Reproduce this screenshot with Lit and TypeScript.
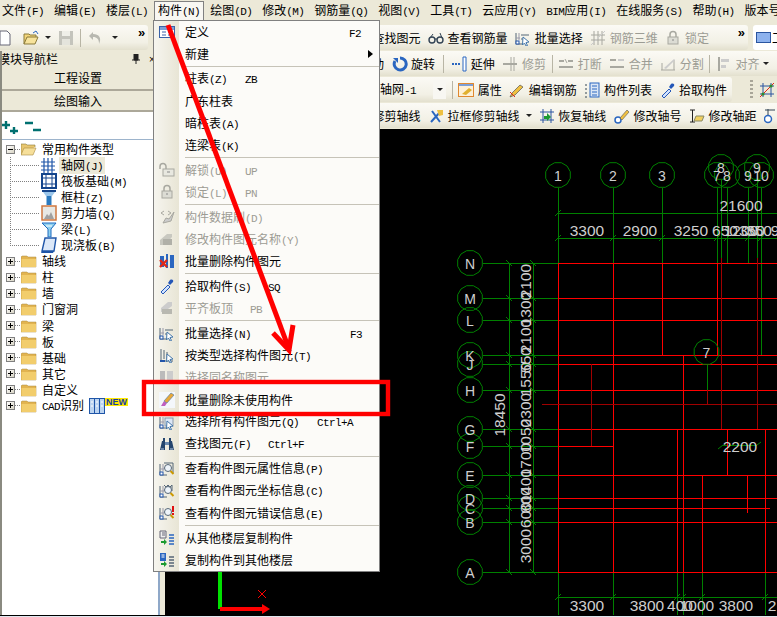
import { LitElement, css, html, svg } from 'lit';
import { customElement } from 'lit/decorators.js';

// latin runs are set apart so they get the half-width look of the original UI font
const txt = (s: string) =>
  s.split(/([\x20-\x7e]+)/).map((p, i) => (i % 2 ? html`<span class="k">${p}</span>` : p));

const G = '#a8a8a0';
const arrowCur = svg`<path d="M8 7l6 5-3 .5 1.5 3-1.5.5-1.5-3-2 2z" fill="#fff" stroke="#47a"/>`;
const lens = svg`<circle cx="9" cy="7" r="3.5" fill="#eef4fa" stroke="#567"/><path d="M11.5 10l3 3" stroke="#c90" stroke-width="2"/>`;
const sheet = svg`<path d="M1 3v11h7" fill="none" stroke="#567"/><path d="M1 8h4M4 3v7" stroke="#99a" fill="none"/><rect x="1" y="11" width="3" height="3" fill="#fff" stroke="#25a"/>`;

const icons: Record<string, unknown> = {
  table: svg`<rect x=".5" y="2.5" width="15" height="11" fill="#fff" stroke="#3a62a8"/><rect x="1" y="3" width="14" height="3" fill="#7d9fd6"/><path d="M3 8h4M9 8h5M3 11h4M9 11h5" stroke="#3a62a8"/>`,
  lock: svg`<path d="M5 7V4.5a3 3 0 016 0V7" fill="none" stroke=${G} stroke-width="1.5"/><rect x="3" y="7" width="10" height="7" fill="#dcdcd4" stroke=${G}/><path d="M7 10h2" stroke="#888"/>`,
  unlock: svg`<path d="M1 7V4.5a3 3 0 016 0V7" fill="none" stroke=${G} stroke-width="1.5"/><rect x="4" y="7" width="11" height="7" fill="#e8e8e0" stroke=${G}/><path d="M8 10h3" stroke="#888"/>`,
  brush: svg`<path d="M2 4l3-2M2 4l3 2M9 2l3 2-3 2" fill="none" stroke=${G}/><path d="M4 14l3-5 3 1 5-7-3 9z" fill="#ccc" stroke=${G}/>`,
  rename: svg`<path d="M1 9l7-6h5v3L6 14H1z" fill="#c8c8c0"/><path d="M4 8h9v6H4z" fill="#b0b0a8"/>`,
  del: svg`<path d="M1 3h4v11H1zM7 1h2v14H7zM11 2h4v13h-4z" fill="#2a66c0"/><path d="M1 7l7 7M8 7l-7 7" stroke="#e02818" stroke-width="2.4"/>`,
  dropper: svg`<path d="M2 14l7-7 2 2-7 7z" fill="#cfe2ff" stroke="#2457b8"/><path d="M9 5l2 2 3-3c1-2-1-3-3-2z" fill="#2457b8"/>`,
  flat: svg`<path d="M2 8l7-6h4v4L5 12H2z" fill="#ccc"/><rect x="3" y="9" width="10" height="5" fill="#b8b8b0"/>`,
  select: svg`${sheet}<path d="M6 5h8M6 9h2" stroke="#567"/>${arrowCur}`,
  bytype: svg`<path d="M2 2v12h12M5 3v9M8 5v7" stroke="#567" fill="none"/><path d="M1 14h5" stroke="#25a" stroke-width="2"/>${arrowCur}`,
  same: svg`<rect x="1" y="2" width="5" height="12" fill="#bbb"/><rect x="8" y="2" width="6" height="12" fill="#ccc"/>`,
  clean: svg`<rect x="0" y="0" width="16" height="16" fill="#f4f7fb"/><path d="M2 14l3-5 3 2-2 3z" fill="#c060c0"/><path d="M5 9l7-8 3 2-7 8z" fill="#e8a838" stroke="#47a" stroke-width=".6"/>`,
  selall: svg`${sheet}<rect x="6" y="4" width="8" height="8" fill="#dbe6f5" stroke="#89a"/>${arrowCur}`,
  bino: svg`<path d="M1 14l2-9h3v9zM10 14V5h3l2 9z" fill="#24456e"/><path d="M4 2h2v3H4zM10 2h2v3h-2z" fill="#24456e"/><rect x="6" y="6" width="4" height="3" fill="#6a8ab0"/><path d="M2 13h3M11 13h3" stroke="#b8cce4"/>`,
  viewp: svg`${sheet}<path d="M5 2h9v10" fill="none" stroke="#567"/>${lens}`,
  viewc: svg`${sheet}<path d="M5 2l2 2 2-2 2 2 2-2v6" fill="none" stroke="#567"/>${lens}`,
  viewe: svg`${sheet}${lens}<path d="M14 1v6M14 8v2" stroke="#e01010" stroke-width="2"/>`,
  copyf: svg`<path d="M1 1h6v7H1z" fill="#eee" stroke="#667"/><path d="M3 3h3M3 5h3" stroke="#667"/><path d="M10 5h5M10 8h5M10 11h5M10 14h5" stroke="#2a66c0" stroke-width="1.6"/><path d="M2 11h3V9l3 3-3 3v-2H2z" fill="#1a9a30"/>`,
  copyt: svg`<path d="M1 1h6v8H1z" fill="#2a66c0"/><path d="M2.5 3h3M2.5 5h3" stroke="#fff"/><path d="M10 5h5M10 8h5M10 11h5M10 14h5" stroke="#567" stroke-width="1.6"/><path d="M2 11h3V9l3 3-3 3v-2H2z" fill="#1a9a30"/>`,
  doc: svg`<path d="M3 1h7l3 3v11H3z" fill="#fff" stroke="#667"/>`,
  open: svg`<path d="M1 14V4h5l1 1h6v2" fill="#f4d67a" stroke="#8a7a3a"/><path d="M1 14l3-7h11l-3 7z" fill="#f7e39c" stroke="#8a7a3a"/><path d="M10 3l3-2 2 3" fill="none" stroke="#2a66c0"/>`,
  save: svg`<rect x="1" y="1" width="14" height="14" fill="#c4c4bc"/><rect x="4" y="1" width="8" height="5" fill="#efefe8"/><rect x="4" y="9" width="8" height="6" fill="#e4e4dc"/>`,
  undo: svg`<path d="M5 2L1 6l4 4V7c4 0 6 2 6 7 3-6 0-10-6-10z" fill="#b8b8b0"/>`,
  find: svg`<circle cx="6" cy="7" r="4" fill="#dbe6f5" stroke="#567"/><path d="M9 10l5 4" stroke="#567" stroke-width="2"/>`,
  glasses: svg`<circle cx="4" cy="10" r="3" fill="none" stroke="#345" stroke-width="1.4"/><circle cx="12" cy="10" r="3" fill="none" stroke="#345" stroke-width="1.4"/><path d="M7 9h2M2 8l3-4M14 8l-2-5" stroke="#345"/>`,
  r3d: svg`<path d="M1 5h14M1 10h14M4 1v14M8 1v14M12 1v14" stroke=${G}/><path d="M1 15L15 1" stroke="#ccc"/>`,
  rotate: svg`<path d="M8 2a6 6 0 11-5 3" fill="none" stroke="#2a66c0" stroke-width="3"/><path d="M1 2h5v5z" fill="#2a66c0"/>`,
  extend: svg`<path d="M1 8h8" stroke="#2a66c0" stroke-dasharray="2 1" stroke-width="2"/><path d="M12 1h3v14h-3z" fill="#fff" stroke="#2a66c0"/>`,
  trim: svg`<path d="M1 8h14" stroke=${G} stroke-width="2"/><path d="M9 1v14M12 1v14" stroke=${G}/>`,
  trimOn: svg`<path d="M1 8h14" stroke="#2a66c0" stroke-width="2"/><path d="M9 1v14M12 1v14" stroke="#345"/>`,
  brk: svg`<path d="M1 5h5M10 5h5M1 11h14" stroke=${G} stroke-width="2"/><path d="M7 3l2 4" stroke=${G}/>`,
  merge: svg`<path d="M1 4h6M1 11h14" stroke=${G} stroke-width="2"/><path d="M9 4h6" stroke="#ccc" stroke-width="2"/>`,
  split: svg`<path d="M1 14h14M2 7v7M14 4v10" stroke=${G}/><path d="M4 12L14 3l1 1-9 9z" fill="#ccc"/>`,
  align: svg`<path d="M2 1h2v14H2z" fill=${G}/><path d="M5 3h8v3H5zM5 9h5v3H5z" fill="#ccc"/>`,
  attr: svg`<rect x=".5" y="1.5" width="15" height="13" fill="#fdf0d8" stroke="#e08830"/><rect x="1" y="2" width="14" height="2" fill="#7d9fd6"/><path d="M4 12l7-6 3 2-6 5z" fill="#e0b030"/>`,
  pencil: svg`<path d="M1 15l2-4 8-8 3 2-8 8z" fill="#f0c040" stroke="#555" stroke-width=".7"/><path d="M1 10l5 5" stroke="#e02818"/>`,
  list: svg`<path d="M1 3h2M1 7h2M1 11h2M1 15h2" stroke="#345" stroke-dasharray="2 1"/><rect x="6" y="1" width="9" height="14" fill="#dbe6f5" stroke="#2a66c0"/><path d="M8 4h5M8 7h5M8 10h5M8 13h5" stroke="#2a66c0"/>`,
  scissor: svg`<path d="M3 14L13 3M12 14L4 3" stroke="#2a66c0" stroke-width="2"/><path d="M9 2h6v5l-4 1z" fill="#eec040"/>`,
  restore: svg`<path d="M1 4h14M1 12h14M4 1v14M12 1v14" stroke="#2a55a0"/><path d="M5 8h3V5l4 4-4 4v-2H5z" fill="#1a9a30"/>`,
  axisno: svg`<circle cx="4" cy="12" r="3" fill="#fff" stroke="#2a66c0" stroke-width="1.5"/><path d="M6 10l7-8 2 2-7 8z" fill="#f0c040" stroke="#555" stroke-width=".6"/>`,
  axisgap: svg`<path d="M1 2h5M1 14h5M3.5 2v12" stroke="#222"/><path d="M5 13l2-5h8l-2 5z" fill="#f0d060" stroke="#886"/>`,
  cross: svg`<path d="M1 4h14M1 12h14M4 1v14M12 1v14" stroke="#2a55a0"/><path d="M1 15L15 1" stroke="#e02818"/><circle cx="4" cy="12" r="1.6" fill="#2a8a2a"/><circle cx="12" cy="4" r="1.6" fill="#2a8a2a"/>`,
  axisr: svg`<circle cx="4" cy="11" r="3.5" fill="#fff" stroke="#2a66c0" stroke-width="1.5"/><path d="M4 1v6M1 2h10" stroke="#345"/>`,
  win: svg`<rect x=".5" y="2.5" width="14" height="10" fill="#8db2ee" stroke="#2a55a0"/>`,
  folder: svg`<path d="M0 4l1-1h5l1 1h8v10H0z" fill="#e2b450" stroke="#a98a40" stroke-width=".5"/><rect x=".5" y="6" width="14.5" height="8" fill="#f2cd6c"/>`,
  folderO: svg`<path d="M0 14V3h5l1 1h8v2" fill="#e8c670" stroke="#8a7a3a" stroke-width=".6"/><path d="M0 14l3-7h12l-3 7z" fill="#f6df9a" stroke="#a98a40" stroke-width=".6"/>`,
  tgrid: svg`<path d="M0 5h14M0 9h14M0 13h14M3 1v15M7 1v15M11 1v15" stroke="#1f55a8" stroke-width="1.2"/>`,
  traft: svg`<rect x="1" y="1" width="14" height="14" fill="#fff" stroke="#14458c" stroke-width="2"/><path d="M1 5h14M1 11h14M5 1v14M11 1v14" stroke="#14458c"/>`,
  tcol: svg`<path d="M1 1h14v2H1z" fill="#14458c"/><path d="M2 3h12l-3 4H5z" fill="#9bc6ea"/><path d="M5.5 7h5v9h-5z" fill="#2a7ac0"/>`,
  twall: svg`<rect x="1" y="1" width="14" height="14" fill="#e8e8e4" stroke="#d07840" stroke-width="1.5"/><path d="M3 14l3-5 2 2 2-4 3 7z" fill="#a0a0a0"/>`,
  tbeam: svg`<path d="M1 2h14l-5 6v8H7V8z" fill="#8fd0ee" stroke="#1f6ac0"/><path d="M5 5l6 0" stroke="#fff"/>`,
  tslab: svg`<path d="M4 1h11l-2 13H1z" fill="#dce8f8" stroke="#1f55a8" stroke-width="1.4"/><path d="M1 14h12l-1 2H0z" fill="#1f55a8"/>`,
  tcad: svg`<rect x=".5" y=".5" width="15" height="15" fill="#bcd4f0" stroke="#1f55a8"/><path d="M5.5 1v14M10.5 1v14" stroke="#1f55a8"/><path d="M2 4h2M7 4h2M12 4h2M2 8h2M7 8h2M12 8h2" stroke="#fff"/>`,
};

const icon = (name: string) => html`<svg class="ic" viewBox="0 0 16 16" width="16" height="16">${icons[name]}</svg>`;

type MenuRow = { t?: string; i?: string; off?: boolean; sc?: string; at?: number; sub?: boolean };

const MENU: MenuRow[] = [
  { t: '定义', i: 'table', sc: 'F2', at: 164 },
  { t: '新建', sub: true },
  {},
  { t: '柱表(Z)', sc: 'ZB', at: 60 },
  { t: '广东柱表' },
  { t: '暗柱表(A)' },
  { t: '连梁表(K)' },
  {},
  { t: '解锁(U)', i: 'unlock', off: true, sc: 'UP', at: 60 },
  { t: '锁定(L)', i: 'lock', off: true, sc: 'PN', at: 60 },
  {},
  { t: '构件数据刷(D)', i: 'brush', off: true },
  { t: '修改构件图元名称(Y)', i: 'rename', off: true },
  { t: '批量删除构件图元', i: 'del' },
  {},
  { t: '拾取构件(S)', i: 'dropper', sc: 'SQ', at: 83 },
  { t: '平齐板顶', i: 'flat', off: true, sc: 'PB', at: 65 },
  {},
  { t: '批量选择(N)', i: 'select', sc: 'F3', at: 165 },
  { t: '按类型选择构件图元(T)', i: 'bytype' },
  { t: '选择同名称图元', i: 'same', off: true },
  { t: '批量删除未使用构件', i: 'clean' },
  { t: '选择所有构件图元(Q)', i: 'selall', sc: 'Ctrl+A', at: 132 },
  { t: '查找图元(F)', i: 'bino', sc: 'Ctrl+F', at: 83 },
  {},
  { t: '查看构件图元属性信息(P)', i: 'viewp' },
  { t: '查看构件图元坐标信息(C)', i: 'viewc' },
  { t: '查看构件图元错误信息(E)', i: 'viewe' },
  {},
  { t: '从其他楼层复制构件', i: 'copyf' },
  { t: '复制构件到其他楼层', i: 'copyt' },
];

const MENUBAR = ['文件(F)', '编辑(E)', '楼层(L)', '构件(N)', '绘图(D)', '修改(M)', '钢筋量(Q)', '视图(V)', '工具(T)', '云应用(Y)', 'BIM应用(I)', '在线服务(S)', '帮助(H)', '版本号'];

const TREE_CHILDREN = [
  ['tgrid', '轴网(J)'],
  ['traft', '筏板基础(M)'],
  ['tcol', '框柱(Z)'],
  ['twall', '剪力墙(Q)'],
  ['tbeam', '梁(L)'],
  ['tslab', '现浇板(B)'],
];
const TREE_FOLDERS = ['轴线', '柱', '墙', '门窗洞', '梁', '板', '基础', '其它', '自定义'];

// drawing coordinates are those of the screenshot
const hAxes: [string, number][] = [['N', 263], ['M', 298], ['L', 320], ['K', 355], ['J', 364], ['H', 390], ['G', 429], ['F', 446], ['E', 475], ['D', 498], ['C', 508], ['B', 522], ['A', 572]];
const vAxes: [string, number, number][] = [['1', 558, 175], ['2', 613, 175], ['3', 662, 175], ['7', 717, 175], ['8', 721, 167], ['8', 727, 175], ['9', 748, 175], ['9', 757, 167], ['10', 761, 175]];
const redH: [number, number, number][] = [[263, 558, 777], [298, 558, 777], [320, 558, 777], [355, 558, 777], [364, 558, 777], [390, 558, 777], [429, 558, 777], [446, 558, 613], [475, 558, 777], [498, 558, 777], [508, 558, 770], [522, 558, 777], [572, 558, 777]];
const redV: [number, number, number][] = [[558, 263, 572], [613, 263, 572], [662, 263, 355], [717, 263, 355], [683, 355, 572], [677, 429, 572], [727, 429, 475], [765, 429, 572], [702, 475, 572], [747, 475, 513]];
const darkV: [number, number, number][] = [[721, 258, 429], [757, 258, 429], [591, 364, 446], [707, 390, 404]];
const dimsTop: [string, number, number][] = [['21600', 741, 211], ['3300', 587, 236], ['2900', 640, 236], ['3250', 691, 236], ['650', 725, 236], ['1200', 741, 236], ['350', 752, 236], ['350', 759, 236], ['9', 775, 236], ['2200', 740, 452], ['3300', 587, 611], ['3800', 647, 611], ['400', 680, 611], ['1000', 697, 611], ['3800', 736, 611], ['2', 772, 611]];
const dimsSide: [string, number, number][] = [['18450', 505, 415], ['2100', 531, 281], ['1300', 531, 309], ['2100', 531, 336], ['550', 531, 360], ['1550', 531, 379], ['2300', 531, 410], ['1050', 531, 436], ['1700', 531, 460], ['1400', 531, 486], ['800', 531, 500], ['600', 531, 515], ['3000', 531, 546]];

const ring = (x: number, y: number, r = 12.7) => {
  const pts = [];
  for (let i = 0; i < 12; i++) {
    const a = (Math.PI / 6) * i + Math.PI / 12;
    pts.push(`${(x + r * Math.cos(a)).toFixed(1)},${(y + r * Math.sin(a)).toFixed(1)}`);
  }
  return pts.join(' ');
};

@customElement('app-root')
export class AppRoot extends LitElement {
  static styles = css`
    :host {
      display: block;
      position: relative;
      width: 777px;
      height: 617px;
      overflow: hidden;
      background: #ece9d8;
      color: #000;
      font: 12px 'Noto Sans CJK SC', 'Liberation Sans', sans-serif;
      line-height: 14px;
    }
    .k { font: 11px 'Liberation Mono', monospace; letter-spacing: -.6px; }
    .ic { flex: none; display: block; }

    .menubar { display: flex; height: 20px; align-items: center; gap: 10px; padding-left: 2px; white-space: nowrap; }
    .menubar .on { position: relative; z-index: 0; }
    .menubar .on::before {
      content: '';
      position: absolute;
      left: -4px;
      right: -4px;
      top: -2px;
      bottom: -4px;
      background: #f8f7f2;
      border: 1px solid #808080;
      border-bottom: none;
      z-index: -1;
    }

    .band { display: flex; align-items: center; gap: 7.6px; background: linear-gradient(#fbfaf5, #f2f0e5 70%, #e3e0ce); white-space: nowrap; }
    .item { display: flex; align-items: center; gap: 3.5px; flex: none; }
    .off { color: #9c9c94; }
    .sep { flex: none; width: 1px; height: 18px; background: #b8b5a5; }
    .sep.t { margin: 0 -2px; }
    .drop { flex: none; width: 0; height: 0; border: 3px solid transparent; border-top: 3px solid #222; border-bottom: none; }
    .r4 .drop { margin: 0 -1px; }

    .row1 { display: flex; height: 31px; padding-top: 5px; box-sizing: border-box; }
    .row1 .band { height: 25px; }
    .row1 .left { width: 148px; box-sizing: border-box; gap: 0; border-radius: 0 3px 3px 0; overflow: hidden; }
    .left .doc { margin-left: -3px; }
    .s6 { flex: none; width: 6px; }
    .s7 { flex: none; width: 7px; }
    .s8 { flex: none; width: 8px; }
    .s10 { flex: none; width: 10px; }
    .s20 { flex: none; width: 20px; }
    .row1 .mid { margin-left: 205px; width: 395px; border-radius: 0 3px 3px 0; }
    .row1 .end { margin-left: 5px; flex: 1; padding-left: 3px; gap: 0; overflow: hidden; background: #fff; border-radius: 3px 0 0 3px; }
    .chev { font: bold 13px 'Liberation Sans', sans-serif; align-self: flex-start; }
    .mid .chev { margin-left: auto; margin-right: 3px; }

    .body { display: flex; height: 564px; }
    .bottom { height: 1px; background: #000; }
    .foot { height: 1px; background: #dfe6ee; }

    .nav { width: 158px; flex: none; display: flex; flex-direction: column; background: #fff; border-left: 2px solid #8a8a80; box-sizing: border-box; overflow: hidden; }
    .nav-head { display: flex; height: 15px; padding-top: 1px; box-sizing: border-box; align-items: center; background: #ece9d8; white-space: nowrap; margin-left: -4px; }
    .nav-head .title { flex: 1; }
    .nav-head .pin { margin-right: 9px; }
    .nav-head .btn { width: 9px; font: 10px 'Liberation Sans', sans-serif; }
    .nav-btn { display: flex; align-items: center; justify-content: center; background: #ece9d8; border-bottom: 2px solid #aca899; box-sizing: border-box; width: 152px; }
    .nav-btn.a { height: 25px; }
    .nav-btn.b { height: 21px; }
    .pm { display: flex; height: 28px; box-sizing: border-box; align-items: center; border-bottom: 1px solid #9db4cc; }
    .tree { padding-top: 1px; }
    .node { display: flex; height: 16.06px; align-items: center; white-space: nowrap; }
    .exp { flex: none; width: 9px; height: 9px; box-sizing: border-box; margin-left: 4px; border: 1px solid #808080; background: linear-gradient(135deg, #fff, #d8d4c4); position: relative; }
    .exp::before { content: ''; position: absolute; left: 1px; right: 1px; top: 3px; height: 1px; background: #000; }
    .exp.plus::after { content: ''; position: absolute; top: 1px; bottom: 1px; left: 3px; width: 1px; background: #000; }
    .stub { flex: none; width: 6px; height: 1px; background: repeating-linear-gradient(to right, #808080 0 1px, transparent 1px 2px); }
    .node .ic { margin-right: 3px; }
    .conn {
      flex: none;
      width: 30px;
      height: 100%;
      margin-left: 8px;
      background:
        repeating-linear-gradient(to right, #808080 0 1px, transparent 1px 2px) 0 8px / 100% 1px no-repeat,
        repeating-linear-gradient(to bottom, #808080 0 1px, transparent 1px 2px) 0 0 / 1px 100% no-repeat;
    }
    .conn.last { background-size: 100% 1px, 1px 9px; }
    .child .ic { margin-left: 1px; margin-right: 2px; }
    .label { padding: 1px 2px; }
    .sel { background: #ece9d8; }
    .cadic { margin-left: 3px; }
    .new { flex: none; background: #ffe800; color: #1a3ea8; font: bold 9px 'Liberation Sans', sans-serif; line-height: 8px; padding: 0 1px; margin: -8px 0 0 -3px; }

    .main { flex: 1; display: flex; flex-direction: column; min-width: 0; }
    .tbrow { display: flex; height: 26px; flex: none; white-space: nowrap; overflow: hidden; }
    .tbrow .band { height: 25px; }
    .r2 .band { flex: 1; padding-left: 202px; }
    .r3 .band { width: 574px; flex: none; padding-left: 222px; box-sizing: border-box; border-radius: 0 3px 3px 0; }
    .r3 .tail { display: flex; align-items: center; gap: 6px; margin-left: 18px; }
    .grip { width: 3px; height: 20px; background: repeating-linear-gradient(to bottom, #a8a598 0 2px, transparent 2px 4px); }
    .r4 .band { flex: 1; padding-left: 195px; }
    .combo { flex: none; display: flex; align-items: center; width: 66px; }
    .combo .txt { flex: 1; }
    .combo .arrow { flex: none; display: flex; align-items: center; justify-content: center; width: 13px; height: 19px; background: #f8f7f2; }
    .stage { flex: 1; display: flex; min-height: 0; }
    .strip { flex: none; width: 7px; box-sizing: border-box; background: #ece9d8; border-left: 2px solid #8fa8c8; }
    .cad { display: block; flex: 1; background: #000; font-family: 'Liberation Sans', sans-serif; min-width: 0; }

    .menu {
      position: absolute;
      left: 153px;
      top: 20px;
      width: 227px;
      height: 552px;
      box-sizing: border-box;
      border: 1px solid #808080;
      background: linear-gradient(to right, #f6f5ef, #e8e5d5 25px, #fcfbf8 25px);
    }
    .mi { display: grid; grid-template-columns: 25px 1fr; height: 22.2px; align-items: center; }
    .mi .cell { display: flex; justify-content: center; }
    .mi .tx { grid-area: 1 / 2; padding-left: 6px; white-space: nowrap; }
    .mi .sc { grid-area: 1 / 2; padding-left: 6px; }
    .mi .tri { grid-area: 1 / 2; justify-self: end; margin-right: 6px; width: 0; height: 0; border: 4px solid transparent; border-left: 5px solid #000; border-right: none; }
    .ms { height: 1px; margin: .75px 0 .75px 31px; background: #c6c3b8; }

    .notes { position: absolute; left: 0; top: 0; pointer-events: none; }
  `;

  renderMenu () {
    return html`<div class="menu">
      ${MENU.map(m => m.t
        ? html`<div class="mi ${m.off ? 'off' : ''}">
            <span class="cell">${m.i ? icon(m.i) : ''}</span>
            <span class="tx">${txt(m.t)}</span>
            ${m.sc ? html`<span class="sc" style="margin-left:${m.at}px">${txt(m.sc)}</span>` : ''}
            ${m.sub ? html`<span class="tri"></span>` : ''}
          </div>`
        : html`<div class="ms"></div>`)}
    </div>`;
  }

  renderNav () {
    return html`<div class="nav">
      <div class="nav-head">
        <span class="title">模块导航栏</span>
        <svg class="pin" width="8" height="10" viewBox="0 0 8 10"><path d="M2 0h4v6H2zM0 6h8M4 6v4" fill="#222" stroke="#222"/></svg>
        <span class="btn">×</span>
      </div>
      <div class="nav-btn a">工程设置</div>
      <div class="nav-btn b">绘图输入</div>
      <div class="pm">
        <svg width="42" height="16" viewBox="0 0 42 16">
          <path d="M0 7h8M4 3v8M8 13h8M12 9v7M23 5h8M31 12h8" stroke="#007070" stroke-width="2.4" fill="none"/>
        </svg>
      </div>
      <div class="tree">
        <div class="node"><span class="exp"></span><span class="stub"></span>${icon('folderO')}<span class="label">常用构件类型</span></div>
        ${TREE_CHILDREN.map(([i, t], n) => html`<div class="node child">
          <span class="conn ${n === TREE_CHILDREN.length - 1 ? 'last' : ''}"></span>${icon(i)}<span class="label ${n === 0 ? 'sel' : ''}">${txt(t)}</span>
        </div>`)}
        ${TREE_FOLDERS.map(t => html`<div class="node"><span class="exp plus"></span><span class="stub"></span>${icon('folder')}<span class="label">${t}</span></div>`)}
        <div class="node"><span class="exp plus"></span><span class="stub"></span>${icon('folder')}<span class="label">${txt('CAD识别')}</span><span class="cadic">${icon('tcad')}</span><span class="new">NEW</span></div>
      </div>
    </div>`;
  }

  renderCad () {
    return svg`
      <g shape-rendering="crispEdges" stroke-width="1" fill="none">
        ${hAxes.map(([, y]) => svg`<path d="M483 ${y}H558" stroke="#008000"/>`)}
        ${vAxes.map(([, x, y]) => svg`<path d="M${x} ${y + 13}V263" stroke="#008000"/>`)}
        <path d="M558 213H777M558 238H777M509 263V572M533 263V572M558 572V615M613 572V615M677 572V615M683 572V615M702 572V615M765 572V615M558 597H777M707 365V390M761 263V355M723 445H757" stroke="#008000"/>
        ${redH.map(([y, a, b]) => svg`<path d="M${a} ${y}H${b}" stroke="#f00"/>`)}
        ${redV.map(([x, a, b]) => svg`<path d="M${x} ${a}V${b}" stroke="#f00"/>`)}
        ${darkV.map(([x, a, b]) => svg`<path d="M${x} ${a}V${b}" stroke="#a00000"/>`)}
        <path d="M542 404H777" stroke="#a00000"/>
      </g>
      <g stroke="#008000" fill="none">
        ${hAxes.map(([, y]) => svg`<path d="M506 ${y - 3}l6 6M530 ${y - 3}l6 6"/>`)}
        ${[558, 613, 662, 717, 727, 748, 761].map(x => svg`<path d="M${x - 3} 241l6-6"/>`)}
        ${[558, 613, 677, 683, 702, 765].map(x => svg`<path d="M${x - 3} 600l6-6"/>`)}
        <path d="M555 216l6-6M718 449l5-4M757 445l4-3"/>
        ${hAxes.map(([, y]) => svg`<polygon points=${ring(470, y)}/>`)}
        ${vAxes.map(([, x, y]) => svg`<polygon points=${ring(x, y)}/>`)}
        <polygon points=${ring(706.5, 352)}/>
      </g>
      <g fill="#cfcfcf" font-size="15.5" text-anchor="middle">
        ${hAxes.map(([l, y]) => svg`<text x="470" y=${y + 5.5} font-size="14">${l}</text>`)}
        ${vAxes.map(([l, x, y]) => svg`<text x=${x} y=${y + 5.5} font-size="14">${l}</text>`)}
        <text x="706.5" y="357.5" font-size="14">7</text>
        ${dimsTop.map(([l, x, y]) => svg`<text x=${x} y=${y}>${l}</text>`)}
        ${dimsSide.map(([l, x, y]) => svg`<text x=${x} y=${y} transform="rotate(-90 ${x} ${y})">${l}</text>`)}
      </g>
      <path d="M220 572V609" stroke="#00e000" stroke-width="4"/>
      <path d="M220 609H263" stroke="#f00" stroke-width="4"/>
      <path d="M262 604l8 5-8 5z" fill="#f00"/>
      <path d="M258 590l8 8M266 590l-8 8" stroke="#f00"/>
    `;
  }

  render () {
    return html`
      <div class="menubar">
        ${MENUBAR.map(m => html`<span class="${m === '构件(N)' ? 'on' : ''}">${txt(m)}</span>`)}
      </div>
      <div class="row1">
        <div class="band left">
          <span class="doc">${icon('doc')}</span>
          <span class="s10"></span>${icon('open')}
          <span class="s6"></span><span class="drop"></span>
          <span class="s7"></span>${icon('save')}
          <span class="s6"></span><span class="sep"></span>
          <span class="s7"></span>${icon('undo')}
          <span class="s8"></span><span class="drop"></span>
          <span class="s20"></span><span class="chev">»</span>
        </div>
        <div class="band mid">
          ${this.item('find', '查找图元')}
          ${this.item('glasses', '查看钢筋量')}
          ${this.item('select', '批量选择')}
          ${this.item('r3d', '钢筋三维', true)}
          ${this.item('lock', '锁定', true)}
          <span class="chev">»</span>
        </div>
        <div class="band end">${icon('win')}<span>工具</span></div>
      </div>
      <div class="body">
        ${this.renderNav()}
        <div class="main">
          <div class="tbrow r2"><div class="band">
            <span>移动</span>
            ${this.item('rotate', '旋转')}
            <span class="sep"></span>
            ${this.item('extend', '延伸')}
            ${this.item('trim', '修剪', true)}
            <span class="sep t"></span>
            ${this.item('brk', '打断', true)}
            ${this.item('merge', '合并', true)}
            ${this.item('split', '分割', true)}
            <span class="sep t"></span>
            <span class="item off">${icon('align')}<span>对齐</span><span class="drop"></span></span>
          </div></div>
          <div class="tbrow r3">
            <div class="band">
              <span class="combo"><span class="txt">${txt('轴网-1')}</span><span class="arrow"><span class="drop"></span></span></span>
              <span class="sep t"></span>
              ${this.item('attr', '属性')}
              ${this.item('pencil', '编辑钢筋')}
              ${this.item('list', '构件列表')}
              ${this.item('dropper', '拾取构件')}
            </div>
            <div class="tail"><span class="grip"></span>${icon('cross')}</div>
          </div>
          <div class="tbrow r4"><div class="band">
            ${this.item('trimOn', '修剪轴线')}
            ${this.item('scissor', '拉框修剪轴线')}
            <span class="drop"></span>
            ${this.item('restore', '恢复轴线')}
            ${this.item('axisno', '修改轴号')}
            ${this.item('axisgap', '修改轴距')}
            ${icon('axisr')}
          </div></div>
          <div class="stage">
            <div class="strip"></div>
            <svg class="cad" viewBox="165 129 612 486">${this.renderCad()}</svg>
          </div>
        </div>
      </div>
      <div class="bottom"></div>
      <div class="foot"></div>
      ${this.renderMenu()}
      <svg class="notes" width="777" height="617" viewBox="0 0 777 617" fill="none" stroke="#f00">
        <path d="M168 25L289 349" stroke-width="5"/>
        <path d="M273 333L289 350L293 325" stroke-width="5"/>
        <rect x="144" y="382" width="244" height="32" stroke-width="4.4"/>
      </svg>
    `;
  }

  item (i: string, t: string, off = false) {
    return html`<span class="item ${off ? 'off' : ''}">${icon(i)}<span>${txt(t)}</span></span>`;
  }
}
